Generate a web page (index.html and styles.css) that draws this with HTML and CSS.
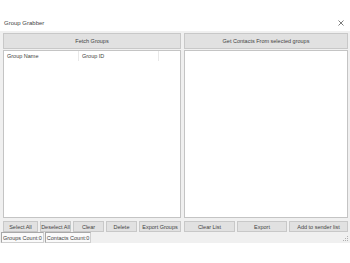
FILE: index.html
```html
<!DOCTYPE html>
<html lang="en">
<head>
    <meta charset="UTF-8">
    <meta name="viewport" content="width=device-width, initial-scale=1.0">
    <title>Group Grabber</title>
    <link rel="stylesheet" href="styles.css">
</head>
<body>

    <div class="titlebar">
        <span class="title">Group Grabber</span>
        <svg class="close" width="6" height="6" viewBox="0 0 6 6">
            <path d="M0.5 0.5 L5.5 5.5 M5.5 0.5 L0.5 5.5" stroke="#444" stroke-width="0.7" fill="none"/>
        </svg>
    </div>

    <div class="form">
        <div class="columns">
            <button class="btn big">Fetch Groups</button>
            <button class="btn big">Get Contacts From selected groups</button>

            <div class="panel">
                <div class="list-header">
                    <div class="col col-name">Group Name</div>
                    <div class="col col-id">Group ID</div>
                </div>
            </div>
            <div class="panel"></div>

            <div class="btn-row left-row">
                <button class="btn small">Select All</button>
                <button class="btn small">Deselect All</button>
                <button class="btn small">Clear</button>
                <button class="btn small">Delete</button>
                <button class="btn small">Export Groups</button>
            </div>
            <div class="btn-row right-row">
                <button class="btn small">Clear List</button>
                <button class="btn small">Export</button>
                <button class="btn small">Add to sender list</button>
            </div>
        </div>

        <div class="statusbar">
            <span class="status-label">Groups Count:0</span>
            <span class="status-label">Contacts Count:0</span>
            <svg class="grip" width="6" height="6" viewBox="0 0 6 6">
                <rect x="4" y="0" width="1" height="1" fill="#b0b0b0"/>
                <rect x="2" y="2" width="1" height="1" fill="#b0b0b0"/>
                <rect x="4" y="2" width="1" height="1" fill="#b0b0b0"/>
                <rect x="0" y="4" width="1" height="1" fill="#b0b0b0"/>
                <rect x="2" y="4" width="1" height="1" fill="#b0b0b0"/>
                <rect x="4" y="4" width="1" height="1" fill="#b0b0b0"/>
            </svg>
        </div>
    </div>

</body>
</html>
```

FILE: styles.css
```css
body {
    margin: 0;
    width: 350px;
    height: 263px;
    background-color: white;
    font-family: "Liberation Sans", Arial, sans-serif;
    font-size: 5.5px;
    color: #444;
    overflow: hidden;
}
.titlebar {
    height: 16px;
    margin-top: 15px;
    display: flex;
    align-items: center;
    justify-content: space-between;
    padding: 0 6px 0 4px;
}
.title {
    font-size: 6px;
    color: #444;
}
.form {
    background-color: #f0f0f0;
    padding-top: 2px;
}
.columns {
    display: grid;
    grid-template-columns: 178px 164px;
    grid-template-rows: 16px 168px 12px;
    column-gap: 3px;
    row-gap: 1px;
    padding-left: 3px;
}
.btn {
    font-family: inherit;
    font-size: 5.5px;
    color: #444;
    background-color: #e1e1e1;
    border: 1px solid #c8c8c8;
    padding: 0;
    margin: 0;
}
.panel {
    background-color: white;
    border: 1px solid #c4c4c4;
}
.list-header {
    display: flex;
    height: 10px;
}
.col {
    display: flex;
    align-items: center;
    padding-left: 3px;
    border-right: 1px solid #e8e8e8;
}
.col-name {
    width: 71px;
}
.col-id {
    width: 76px;
}
.btn-row {
    display: flex;
    gap: 2px;
    margin-top: 2px;
    height: 11px;
}
.left-row .btn:nth-child(1) { width: 35px; }
.left-row .btn:nth-child(2) { width: 31px; }
.left-row .btn:nth-child(3) { width: 31px; }
.left-row .btn:nth-child(4) { width: 31px; }
.left-row .btn:nth-child(5) { width: 42px; }
.right-row .btn:nth-child(1) { width: 51px; }
.right-row .btn:nth-child(2) { width: 50px; }
.right-row .btn:nth-child(3) { width: 59px; }
.statusbar {
    display: flex;
    align-items: stretch;
    height: 11px;
    margin-top: 1px;
    padding-left: 1px;
    position: relative;
}
.status-label {
    display: flex;
    align-items: center;
    padding: 0 1px;
    border: 1px solid #d0d0d0;
    border-top-color: #a8a8a8;
    border-left-color: #a8a8a8;
    background-color: #fafafa;
    margin-right: 1px;
}
.grip {
    position: absolute;
    right: 1px;
    bottom: 1px;
}
```
